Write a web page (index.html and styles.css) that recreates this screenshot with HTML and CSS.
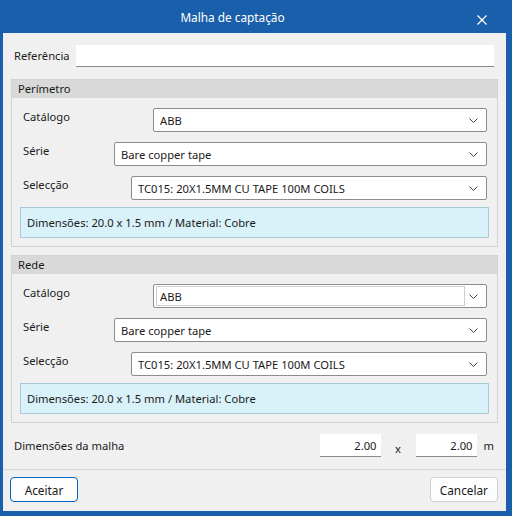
FILE: index.html
```html
<!DOCTYPE html>
<html lang="pt">
<head>
  <meta charset="UTF-8">
  <title>Malha de captação</title>
  <link rel="stylesheet" href="styles.css">
</head>
<body>
  <div class="window">
    <div class="titlebar">
      <span class="title">Malha de captação</span>
      <span class="close">
        <svg width="10" height="10" viewBox="0 0 10 10"><path d="M0.5 0.5L9.5 9.5M9.5 0.5L0.5 9.5" stroke="#fff" stroke-width="1.3"/></svg>
      </span>
    </div>

    <div class="client">
      <div class="ref-row">
        <label>Referência</label>
        <input type="text" class="ref-input">
      </div>

      <div class="group">
        <div class="group-head">Perímetro</div>
        <div class="group-body">
          <div class="row">
            <label>Catálogo</label>
            <div class="combo w-cat"><span>ABB</span><svg class="chev" width="9" height="5" viewBox="0 0 9 5"><path d="M0.5 0.5L4.5 4.5L8.5 0.5" fill="none" stroke="#444"/></svg></div>
          </div>
          <div class="row">
            <label>Série</label>
            <div class="combo w-serie"><span>Bare copper tape</span><svg class="chev" width="9" height="5" viewBox="0 0 9 5"><path d="M0.5 0.5L4.5 4.5L8.5 0.5" fill="none" stroke="#444"/></svg></div>
          </div>
          <div class="row">
            <label>Selecção</label>
            <div class="combo w-sel"><span>TC015: 20X1.5MM CU TAPE 100M COILS</span><svg class="chev" width="9" height="5" viewBox="0 0 9 5"><path d="M0.5 0.5L4.5 4.5L8.5 0.5" fill="none" stroke="#444"/></svg></div>
          </div>
          <div class="info">Dimensões: 20.0 x 1.5 mm / Material: Cobre</div>
        </div>
      </div>

      <div class="group">
        <div class="group-head">Rede</div>
        <div class="group-body">
          <div class="row">
            <label>Catálogo</label>
            <div class="combo editable w-cat"><span class="edit-box">ABB</span><svg class="chev" width="9" height="5" viewBox="0 0 9 5"><path d="M0.5 0.5L4.5 4.5L8.5 0.5" fill="none" stroke="#444"/></svg></div>
          </div>
          <div class="row">
            <label>Série</label>
            <div class="combo w-serie"><span>Bare copper tape</span><svg class="chev" width="9" height="5" viewBox="0 0 9 5"><path d="M0.5 0.5L4.5 4.5L8.5 0.5" fill="none" stroke="#444"/></svg></div>
          </div>
          <div class="row">
            <label>Selecção</label>
            <div class="combo w-sel"><span>TC015: 20X1.5MM CU TAPE 100M COILS</span><svg class="chev" width="9" height="5" viewBox="0 0 9 5"><path d="M0.5 0.5L4.5 4.5L8.5 0.5" fill="none" stroke="#444"/></svg></div>
          </div>
          <div class="info">Dimensões: 20.0 x 1.5 mm / Material: Cobre</div>
        </div>
      </div>

      <div class="dims">
        <label>Dimensões da malha</label>
        <div class="dims-fields">
          <input type="text" class="num" value="2.00">
          <span class="times">x</span>
          <input type="text" class="num" value="2.00">
          <span class="unit">m</span>
        </div>
      </div>

      <div class="buttons">
        <button class="btn primary">Aceitar</button>
        <button class="btn">Cancelar</button>
      </div>
    </div>
  </div>
</body>
</html>
```

FILE: styles.css
```css
body {
  margin: 0;
  font-family: 'Noto Sans', sans-serif;
  font-size: 11.2px;
  color: #1a1a1a;
}

.window {
  width: 512px;
  height: 516px;
  box-sizing: border-box;
  background: #1a5fab;
  border-left: 3px solid #1a5fab;
  border-right: 6px solid #1a5fab;
  border-bottom: 5px solid #1a5fab;
  display: flex;
  flex-direction: column;
}

.titlebar {
  height: 33px;
  display: flex;
  align-items: center;
  justify-content: center;
  position: relative;
  color: #fff;
  font-size: 11.8px;
}

.title {
  margin-left: -44px;
}

.close {
  position: absolute;
  right: 19px;
  top: 15px;
  line-height: 0;
}

.client {
  flex: 1;
  background: #f0f0f0;
  display: flex;
  flex-direction: column;
}

.ref-row {
  display: flex;
  align-items: center;
  padding: 11px 0 0 11px;
  height: 23px;
}

.ref-row label {
  width: 62px;
}

.ref-input {
  width: 418px;
  height: 22px;
  box-sizing: border-box;
  border: none;
  border-bottom: 1px solid #8c8c8c;
  background: #fff;
  margin: 0;
}

.group {
  margin: 12px 0 0 8px;
  width: 485px;
  border: 1px solid #d2d2d2;
}

.group + .group {
  margin-top: 8px;
}

.group-head {
  background: #d9d9d9;
  height: 18px;
  line-height: 18px;
  padding-left: 6px;
}

.group-body {
  padding: 10px 8px 8px 8px;
  display: flex;
  flex-direction: column;
  gap: 10px;
}

.row {
  display: flex;
  justify-content: space-between;
  align-items: flex-start;
  padding-right: 2px;
}

.row label {
  padding: 1px 0 0 3px;
}

.combo {
  height: 24px;
  box-sizing: border-box;
  background: #fff;
  border: 1px solid #8d8d8d;
  border-radius: 2px;
  display: flex;
  align-items: center;
  padding-left: 6px;
}

.combo span {
  flex: 1;
}

.w-cat { width: 334px; }
.w-serie { width: 373px; }
.w-sel { width: 356px; }

.combo.editable {
  padding-left: 2px;
}

.combo .edit-box {
  flex: none;
  width: 309px;
  height: 20px;
  line-height: 20px;
  box-sizing: border-box;
  border: 1px solid #cfcfcf;
  padding-left: 3px;
}

.chev {
  margin: 0 8px 0 0;
}

.combo.editable .chev {
  margin-left: auto;
}

.info {
  background: #d9f1f8;
  border: 1px solid #a6cbd6;
  height: 31px;
  box-sizing: border-box;
  line-height: 29px;
  padding-left: 6px;
  margin-top: -3px;
}

.dims {
  display: flex;
  justify-content: space-between;
  align-items: flex-start;
  padding: 11px 11px 0 11px;
  height: 35px;
  border-bottom: 1px solid #d8d8d8;
}

.dims label {
  padding-top: 4px;
}

.dims-fields {
  display: flex;
  align-items: center;
  margin-right: 1px;
}

.num {
  width: 61px;
  height: 23px;
  box-sizing: border-box;
  border: none;
  border-bottom: 1px solid #8c8c8c;
  background: #fff;
  text-align: right;
  padding-right: 4px;
  font: inherit;
  color: inherit;
  margin: 0;
}

.times {
  width: 35px;
  text-align: center;
  padding-top: 6px;
}

.unit {
  margin-left: 7px;
}

.buttons {
  display: flex;
  justify-content: space-between;
  padding: 7px 8px 0 7px;
}

.btn {
  font: inherit;
  font-size: 11.8px;
  color: inherit;
  height: 25px;
  padding: 0 9px;
  background: #fdfdfd;
  border: 1px solid #d0d0d0;
  border-radius: 4px;
}

.btn.primary {
  border: 1px solid #0067c0;
  width: 68px;
}
```
